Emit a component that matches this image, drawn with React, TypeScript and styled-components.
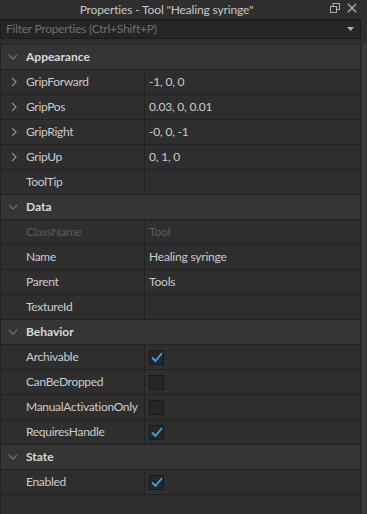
import React from 'react'
import { styled, createGlobalStyle } from 'styled-components'

const GlobalStyle = createGlobalStyle`
    html, body {
        margin: 0;
        padding: 0;
        background: #2e2e2e;
        width: 367px;
        height: 514px;
        overflow: hidden;
    }
    * { box-sizing: border-box; }
`

const Window = styled.div`
    width: 367px;
    height: 514px;
    background: #2e2e2e;
    font-family: "Lato", "Noto Sans", sans-serif;
    display: flex;
    flex-direction: column;
`

const TitleBar = styled.div`
    height: 19px;
    display: flex;
    align-items: center;
    justify-content: center;
    position: relative;
    color: #c8c8c8;
    font-size: 12px;
    letter-spacing: -0.15px;
    padding-right: 34px;
`

const TitleIcons = styled.div`
    position: absolute;
    right: 10px;
    top: 3px;
    display: flex;
    gap: 7px;
    align-items: center;
`

const Filter = styled.div`
    height: 20px;
    margin: 0 6px 5px 0;
    background: #252525;
    border: 1px solid #1b1b1b;
    display: flex;
    align-items: center;
    justify-content: space-between;
    padding: 0 6px 1px 5px;
    color: #6f6f6f;
    font-size: 12px;
    letter-spacing: -0.25px;
`

const Body = styled.div`
    flex: 1;
    display: flex;
`

const List = styled.div`
    flex: 1;
    border-top: 1px solid #232323;
    border-left: 1px solid #232323;
    border-right: 1px solid #232323;
`

const Scrollbar = styled.div`
    width: 5px;
    background: #3a3a3a;
    margin-left: 1px;
`

const Row = styled.div<{ $header?: boolean }>`
    height: 25px;
    display: flex;
    border-bottom: 1px solid #222222;
    background: ${p => (p.$header ? '#353535' : '#2e2e2e')};
`

const NameCell = styled.div<{ $header?: boolean; $disabled?: boolean }>`
    width: 144px;
    display: flex;
    align-items: center;
    padding: 0 0 1px 7px;
    border-right: ${p => (p.$header ? 'none' : '1px solid #222222')};
    color: ${p => (p.$disabled ? '#5c5c5c' : p.$header ? '#d8d8d8' : '#cccccc')};
    font-size: 12px;
    letter-spacing: ${p => (p.$header ? '0' : '-0.3px')};
    font-weight: ${p => (p.$header ? 700 : 400)};
    white-space: nowrap;
`

const Arrow = styled.span`
    width: 18px;
    display: flex;
    align-items: center;
    flex-shrink: 0;
    padding-top: 1px;
`

const ValueCell = styled.div<{ $disabled?: boolean }>`
    flex: 1;
    display: flex;
    align-items: center;
    padding: 0 0 1px 4px;
    color: ${p => (p.$disabled ? '#5c5c5c' : '#cccccc')};
    font-size: 12px;
    letter-spacing: -0.2px;
`

const Box = styled.div`
    width: 15px;
    height: 15px;
    margin-top: 1px;
    background: #262626;
    border: 1px solid #1a1a1a;
    display: flex;
    align-items: center;
    justify-content: center;
`

const Down = () => (
    <svg width="10" height="6" viewBox="0 0 10 6">
        <path d="M1 1 L5 5 L9 1" stroke="#6e6e6e" strokeWidth="1.3" fill="none" />
    </svg>
)

const Right = () => (
    <svg width="6" height="10" viewBox="0 0 6 10" style={{ marginLeft: 3 }}>
        <path d="M1 1 L5 5 L1 9" stroke="#8a8a8a" strokeWidth="1.3" fill="none" />
    </svg>
)

const Check = ({ on }: { on: boolean }) => (
    <Box>
        {on && (
            <svg width="12" height="11" viewBox="0 0 12 11">
                <path d="M1 5.5 L4.5 9 L11 1" stroke="#3aa7f0" strokeWidth="1.8" fill="none" />
            </svg>
        )}
    </Box>
)

type Prop = { name: string; value?: string; expand?: boolean; check?: boolean; disabled?: boolean }
type Section = { title: string; props: Prop[] }

const sections: Section[] = [
    {
        title: 'Appearance',
        props: [
            { name: 'GripForward', value: '-1, 0, 0', expand: true },
            { name: 'GripPos', value: '0.03, 0, 0.01', expand: true },
            { name: 'GripRight', value: '-0, 0, -1', expand: true },
            { name: 'GripUp', value: '0, 1, 0', expand: true },
            { name: 'ToolTip', value: '' },
        ],
    },
    {
        title: 'Data',
        props: [
            { name: 'ClassName', value: 'Tool', disabled: true },
            { name: 'Name', value: 'Healing syringe' },
            { name: 'Parent', value: 'Tools' },
            { name: 'TextureId', value: '' },
        ],
    },
    {
        title: 'Behavior',
        props: [
            { name: 'Archivable', check: true },
            { name: 'CanBeDropped', check: false },
            { name: 'ManualActivationOnly', check: false },
            { name: 'RequiresHandle', check: true },
        ],
    },
    {
        title: 'State',
        props: [{ name: 'Enabled', check: true }],
    },
]

const App: React.FC = () => {
    return (<>
        <GlobalStyle />
        <Window>
            <TitleBar>
                Properties - Tool "Healing syringe"
                <TitleIcons>
                    <svg width="10" height="10" viewBox="0 0 10 10">
                        <rect x="3" y="0.5" width="6.5" height="6" fill="none" stroke="#b0b0b0" strokeWidth="1" />
                        <rect x="0.5" y="3.5" width="6" height="6" fill="#2e2e2e" stroke="#b0b0b0" strokeWidth="1" />
                    </svg>
                    <svg width="10" height="10" viewBox="0 0 10 10">
                        <path d="M1 1 L9 9 M9 1 L1 9" stroke="#b0b0b0" strokeWidth="1.4" />
                    </svg>
                </TitleIcons>
            </TitleBar>
            <Filter>
                <span>Filter Properties (Ctrl+Shift+P)</span>
                <svg width="7" height="4" viewBox="0 0 7 4">
                    <path d="M0 0 L7 0 L3.5 4 Z" fill="#b0b0b0" />
                </svg>
            </Filter>
            <Body>
                <List>
                    {sections.map(s => (
                        <React.Fragment key={s.title}>
                            <Row $header>
                                <NameCell $header>
                                    <Arrow><Down /></Arrow>
                                    {s.title}
                                </NameCell>
                            </Row>
                            {s.props.map(p => (
                                <Row key={p.name}>
                                    <NameCell $disabled={p.disabled}>
                                        <Arrow>{p.expand && <Right />}</Arrow>
                                        {p.name}
                                    </NameCell>
                                    <ValueCell $disabled={p.disabled}>
                                        {p.check !== undefined ? <Check on={p.check} /> : p.value}
                                    </ValueCell>
                                </Row>
                            ))}
                        </React.Fragment>
                    ))}
                </List>
                <Scrollbar />
            </Body>
        </Window>
    </>
    )
}

export default App
